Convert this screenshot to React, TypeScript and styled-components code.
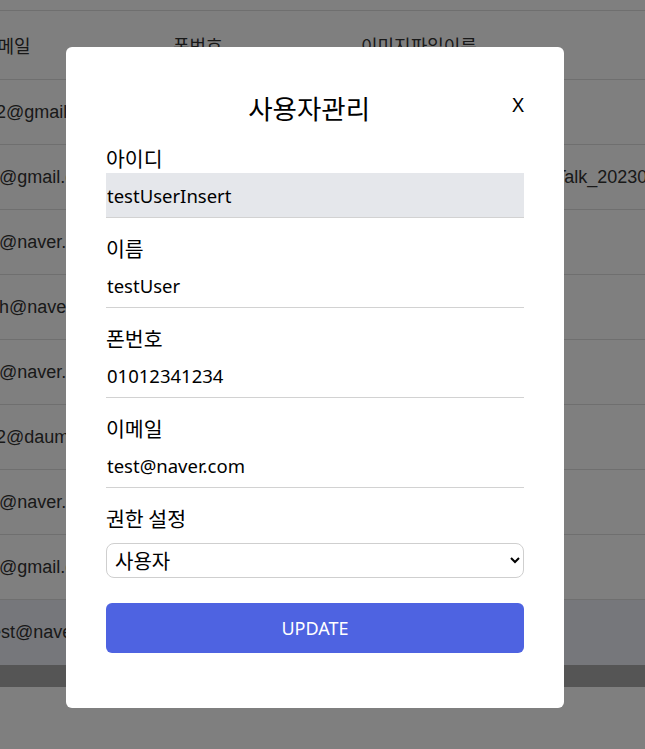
import React from "react";
import styled, { createGlobalStyle } from "styled-components";

const Global = createGlobalStyle`
  html, body { margin: 0; padding: 0; background: #fff; }
  body { font-family: "Noto Sans", "Noto Sans CJK KR", sans-serif; overflow: hidden; }
  * { box-sizing: border-box; }
`;

const Page = styled.div`
  width: 645px;
  height: 749px;
  overflow: hidden;
  padding-top: 10px;
`;

const Table = styled.div`
  margin-left: -14px;
  width: 900px;
  border-top: 1px solid #dedede;
  font-family: "Liberation Sans", "Noto Sans CJK KR", sans-serif;
  font-size: 18px;
  color: #333;
`;

const Row = styled.div<{ $h: number; $hl?: boolean }>`
  display: flex;
  align-items: center;
  height: ${(p) => p.$h}px;
  border-bottom: ${(p) => (p.$hl ? "none" : "1px solid #dedede")};
  background: ${(p) => (p.$hl ? "#eceef6" : "transparent")};
  white-space: nowrap;
`;

const Cell = styled.div<{ $w: number }>`
  width: ${(p) => p.$w}px;
  flex: none;
  overflow: visible;
`;

const HeadCell = styled(Cell)<{ $indent?: number }>`
  font-family: "Noto Sans CJK KR", sans-serif;
  font-size: 18px;
  text-indent: ${(p) => p.$indent ?? 0}px;
`;

const ScrollBar = styled.div`
  width: 100%;
  height: 22px;
  background: #ababab;
`;

const Overlay = styled.div`
  position: fixed;
  inset: 0;
  background: rgba(0, 0, 0, 0.5);
  display: flex;
  align-items: flex-start;
  padding: 47px 0 0 66px;
`;

const Modal = styled.div`
  width: 498px;
  height: 661px;
  background: #fff;
  border-radius: 6px;
  padding: 40px 40px;
  display: flex;
  flex-direction: column;
`;

const Header = styled.div`
  display: flex;
  align-items: center;
  height: 40px;
  margin-bottom: 16px;
`;

const Title = styled.h2`
  flex: 1;
  margin: 0;
  text-align: center;
  font-family: "Noto Sans CJK KR", sans-serif;
  font-weight: 400;
  font-size: 26.5px;
  color: #000;
`;

const Close = styled.span`
  font-family: "Noto Sans", sans-serif;
  font-size: 20px;
  color: #000;
  line-height: 1;
  margin-top: -4px;
`;

const Field = styled.div<{ $gap?: number }>`
  display: flex;
  flex-direction: column;
  margin-bottom: ${(p) => p.$gap ?? 15}px;
`;

const Label = styled.label`
  height: 30px;
  line-height: 30px;
  font-family: "Noto Sans CJK KR", sans-serif;
  font-size: 20.5px;
  color: #000;
`;

const Input = styled.input<{ $disabled?: boolean }>`
  height: 45px;
  border: none;
  border-bottom: 1px solid #d2d2d2;
  background: ${(p) => (p.$disabled ? "#e5e7eb" : "transparent")};
  padding: 0 0 0 1px;
  font-family: "Noto Sans", "Noto Sans CJK KR", sans-serif;
  font-size: 18.5px;
  color: #000;
  outline: none;
`;

const Select = styled.select`
  margin-top: 10px;
  height: 35px;
  border: 1px solid #cfcfcf;
  border-radius: 8px;
  background: #fff;
  padding: 0 4px;
  font-family: "Noto Sans CJK KR", sans-serif;
  font-size: 20px;
  color: #000;
  outline: none;
`;

const Button = styled.button`
  margin-top: 25px;
  height: 50px;
  border: none;
  border-radius: 6px;
  background: #4e63e1;
  color: #fff;
  font-family: "Noto Sans", sans-serif;
  font-size: 18px;
  cursor: pointer;
`;

const rows = [
  ["12@gmail.com", ""],
  ["w@gmail.com", "d3f1b2c8-9e7axl_KakaoTalk_20230607_153012.jpg"],
  ["w@naver.com", ""],
  ["wh@naver.com", ""],
  ["w@naver.com", ""],
  ["12@daum.net", ""],
  ["w@naver.com", ""],
  ["w@gmail.com", ""],
  ["test@naver.com", ""],
];

export default function App() {
  return (
    <>
      <Global />
      <Page>
        <Table>
          <Row $h={69}>
            <HeadCell $w={187} $indent={-5}>이메일</HeadCell>
            <HeadCell $w={188}>폰번호</HeadCell>
            <HeadCell $w={300}>이미지파일이름</HeadCell>
          </Row>
          {rows.map((r, i) => (
            <Row key={i} $h={65} $hl={i === rows.length - 1}>
              <Cell $w={187}>{r[0]}</Cell>
              <Cell $w={188}>010-1234-5678</Cell>
              <Cell $w={300}>{r[1]}</Cell>
            </Row>
          ))}
          <ScrollBar />
        </Table>
      </Page>
      <Overlay>
        <Modal>
          <Header>
            <Title>사용자관리</Title>
            <Close>X</Close>
          </Header>
          <Field>
            <Label>아이디</Label>
            <Input $disabled disabled defaultValue="testUserInsert" />
          </Field>
          <Field>
            <Label>이름</Label>
            <Input defaultValue="testUser" />
          </Field>
          <Field>
            <Label>폰번호</Label>
            <Input defaultValue="01012341234" />
          </Field>
          <Field>
            <Label>이메일</Label>
            <Input defaultValue="test@naver.com" />
          </Field>
          <Field $gap={0}>
            <Label>권한 설정</Label>
            <Select defaultValue="user">
              <option value="user">사용자</option>
              <option value="admin">관리자</option>
            </Select>
          </Field>
          <Button>UPDATE</Button>
        </Modal>
      </Overlay>
    </>
  );
}
